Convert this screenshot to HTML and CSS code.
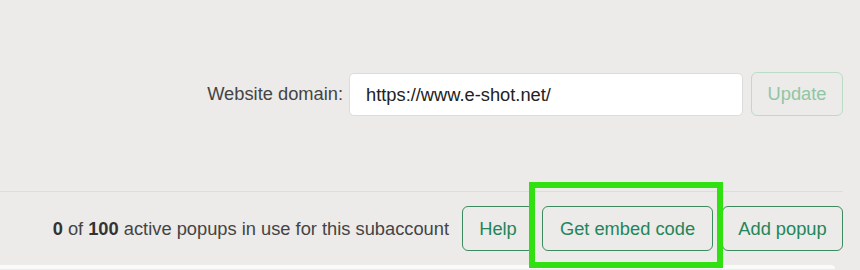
FILE: index.html
```html
<!DOCTYPE html>
<html lang="en">
<head>
    <meta charset="UTF-8">
    <meta name="viewport" content="width=device-width, initial-scale=1.0">
    <title>Popups</title>
    <link rel="stylesheet" href="styles.css">
</head>
<body>

    <div class="page">
        <div class="settings">
            <label for="domain" class="domain-label">Website domain:</label>
            <input id="domain" class="domain-input" type="text" value="https://www.e-shot.net/">
            <button class="btn btn-disabled" type="button" disabled>Update</button>
        </div>

        <div class="toolbar">
            <span class="usage"><b>0</b> of <b>100</b> active popups in use for this subaccount</span>
            <button class="btn" type="button">Help</button>
            <button class="btn" type="button">Get embed code</button>
            <button class="btn" type="button">Add popup</button>
            <div class="highlight"></div>
        </div>

        <div class="panel"></div>
    </div>

</body>
</html>
```

FILE: styles.css
```css
body {
    margin: 0;
    background-color: #ecebe9;
    font-family: "Liberation Sans", Arial, sans-serif;
    font-size: 18.3px;
    color: #444;
    overflow: hidden;
}

.page {
    width: 843px;
}

.settings {
    height: 192px;
    box-sizing: border-box;
    padding-top: 72px;
    display: flex;
    justify-content: flex-end;
    align-items: flex-start;
    border-bottom: 1px solid #dedddb;
}

.domain-label {
    line-height: 44px;
    margin-right: 6px;
    color: #444;
}

.domain-input {
    width: 394px;
    height: 43px;
    box-sizing: border-box;
    margin: 1px 8px 0 0;
    padding: 0 16px;
    border: 1px solid #dcdcdc;
    border-radius: 5px;
    background: #fff;
    font-family: inherit;
    font-size: 18.3px;
    color: #222;
}

.btn {
    height: 45px;
    box-sizing: border-box;
    padding: 0;
    border: 1.5px solid #3d8a5f;
    border-radius: 6px;
    background: transparent;
    font-family: inherit;
    font-size: 18.3px;
    color: #238559;
    white-space: nowrap;
    text-align: center;
}

.btn-disabled {
    width: 92px;
    height: 44px;
    border-color: #b9dcc6;
    color: #8fc6a4;
}

.toolbar {
    position: relative;
    height: 73px;
    box-sizing: border-box;
    padding-top: 14px;
    display: flex;
    justify-content: flex-end;
    align-items: flex-start;
    gap: 8px;
}

.usage {
    line-height: 45px;
    margin-right: 5px;
    color: #444;
    white-space: nowrap;
}

.usage b {
    font-weight: bold;
    color: #333;
}

.toolbar .btn:nth-of-type(1) {
    width: 72px;
}

.toolbar .btn:nth-of-type(2) {
    width: 171px;
}

.toolbar .btn:nth-of-type(3) {
    width: 121px;
    margin-left: 1px;
}

.highlight {
    position: absolute;
    left: 529px;
    top: -10px;
    width: 194px;
    height: 86px;
    box-sizing: border-box;
    border: 6px solid #30e010;
}

.panel {
    height: 4px;
    margin-right: 8px;
    background: #fafafa;
    border-radius: 0 8px 0 0;
}
```
